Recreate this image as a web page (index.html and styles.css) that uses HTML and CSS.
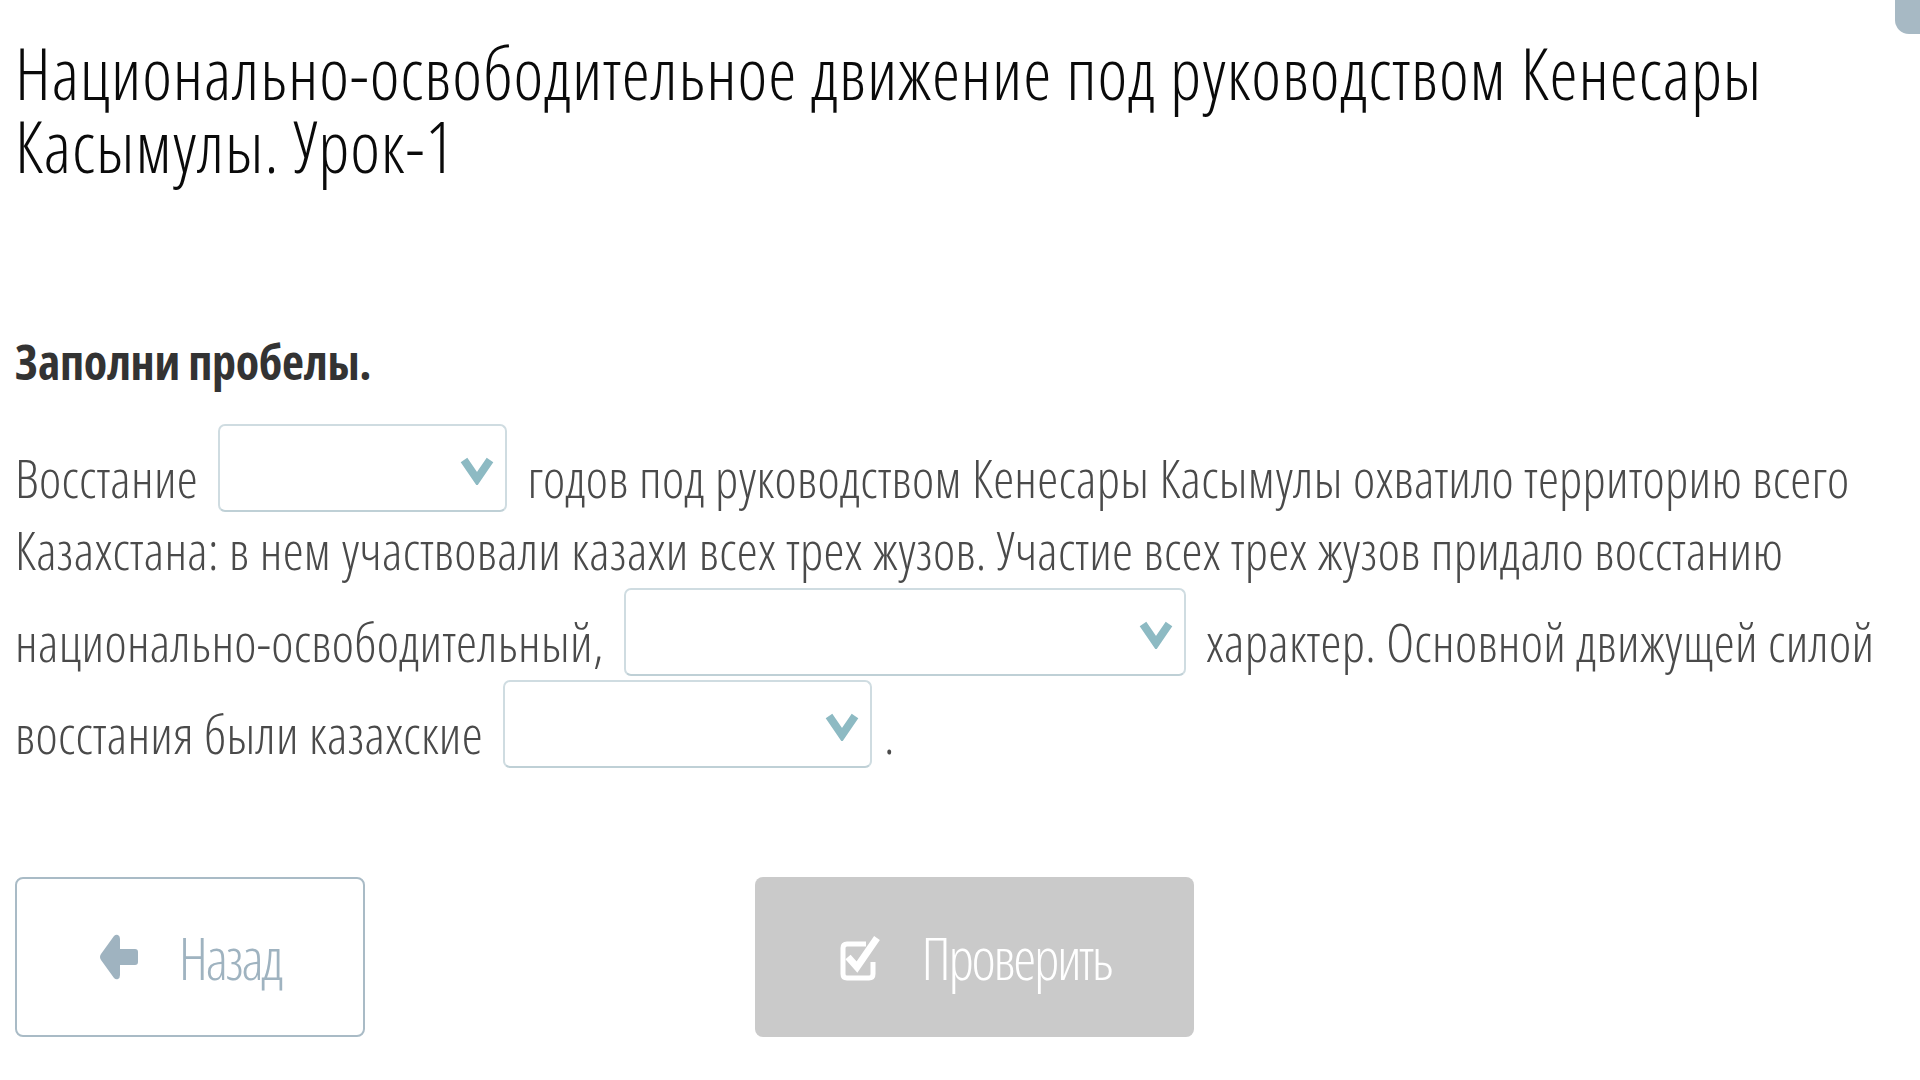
FILE: index.html
```html
<!DOCTYPE html>
<html lang="ru">
<head>
<meta charset="utf-8">
<title>Урок</title>
<link rel="stylesheet" href="styles.css">
</head>
<body>
<div class="corner"></div>
<main class="page">
  <h1 class="title">Национально-освободительное движение под руководством Кенесары Касымулы. Урок-1</h1>
  <h2 class="task">Заполни пробелы.</h2>
  <p class="text">Восстание <span class="select s1"><svg class="chev" viewBox="0 0 34 30"><path d="M4 5 L17 24 L30 5" /></svg></span> годов под руководством Кенесары Касымулы охватило территорию всего Казахстана: в нем участвовали казахи всех трех жузов. Участие всех трех жузов придало восстанию национально-освободительный, <span class="select s2"><svg class="chev" viewBox="0 0 34 30"><path d="M4 5 L17 24 L30 5" /></svg></span> характер. Основной движущей силой восстания были казахские <span class="select s3"><svg class="chev" viewBox="0 0 34 30"><path d="M4 5 L17 24 L30 5" /></svg></span><span class="dot">.</span></p>
  <div class="actions">
    <button class="btn back"><svg class="ico" viewBox="0 0 40 48"><path d="M19 2 Q17 1 15 3 L2 21 Q0 24 2 27 L15 45 Q17 47 19 46 Q21 45 21 42 L21 32 L36 32 Q39 32 39 29 L39 19 Q39 16 36 16 L21 16 L21 6 Q21 3 19 2 Z"/></svg><span>Назад</span></button>
    <button class="btn check"><svg class="ico" viewBox="0 0 44 50"><path class="box" d="M28 12 L9 12 Q5 12 5 16 L5 42 Q5 46 9 46 L31 46 Q35 46 35 42 L35 30"/><path class="tick" d="M10 25 L19 35 L39 6"/></svg><span>Проверить</span></button>
  </div>
</main>
</body>
</html>
```
FILE: styles.css
```css
html, body {
  margin: 0;
  padding: 0;
  background: #ffffff;
}
body {
  font-family: "Open Sans", "Noto Sans", sans-serif;
  font-stretch: 75%;
  font-weight: 350;
  color: #4a4a4a;
}
.corner {
  position: absolute;
  top: 0;
  right: 0;
  width: 25px;
  height: 34px;
  background: #a7b9c4;
  border-bottom-left-radius: 14px;
}
.page {
  padding: 36px 15px 0 15px;
}
.title {
  margin: 0;
  font-size: 71px;
  line-height: 73px;
  font-weight: 360;
  letter-spacing: 0.9px;
  color: #0a0a0a;
}
.task {
  margin: 150px 0 0 0;
  font-size: 48px;
  line-height: 60px;
  font-weight: 700;
  letter-spacing: -0.3px;
  color: #333333;
}
.text {
  margin: 30px 0 0 0;
  font-size: 53px;
  line-height: 72px;
  letter-spacing: 0.3px;
  color: #4a4a4a;
}
.select {
  display: inline-block;
  overflow: hidden;
  box-sizing: border-box;
  height: 88px;
  margin: 2px 10px 0 10px;
  border: 2px solid #cfdce1;
  border-bottom-color: #bfd0d6;
  border-radius: 7px;
  vertical-align: -14px;
  text-align: right;
  padding: 29px 11px 0 0;
  line-height: 0;
}
.s1 { width: 289px; }
.s2 { width: 562px; }
.s3 { width: 369px; }
.chev {
  width: 34px;
  height: 30px;
}
.chev path {
  fill: none;
  stroke: #8dbac3;
  stroke-width: 8;
  stroke-linejoin: miter;
}
.dot {
  margin-left: 2px;
}
.actions {
  display: flex;
  gap: 390px;
  margin-top: 107px;
}
.btn {
  display: flex;
  align-items: center;
  justify-content: center;
  gap: 40px;
  height: 160px;
  box-sizing: border-box;
  border-radius: 8px;
  font-family: "Open Sans", "Noto Sans", sans-serif;
  font-stretch: 75%;
  font-weight: 350;
  font-size: 58px;
  letter-spacing: -2.3px;
  padding: 0;
}
.back {
  width: 350px;
  background: #ffffff;
  border: 2px solid #a9bbc6;
  color: #9fb3c0;
}
.back .ico {
  width: 40px;
  height: 48px;
  fill: #9fb3c0;
}
.check {
  width: 439px;
  background: #cacaca;
  border: none;
  color: #ffffff;
}
.check .ico {
  width: 44px;
  height: 50px;
}
.check .box {
  fill: none;
  stroke: #ffffff;
  stroke-width: 5;
}
.check .tick {
  fill: none;
  stroke: #ffffff;
  stroke-width: 7;
}
```
